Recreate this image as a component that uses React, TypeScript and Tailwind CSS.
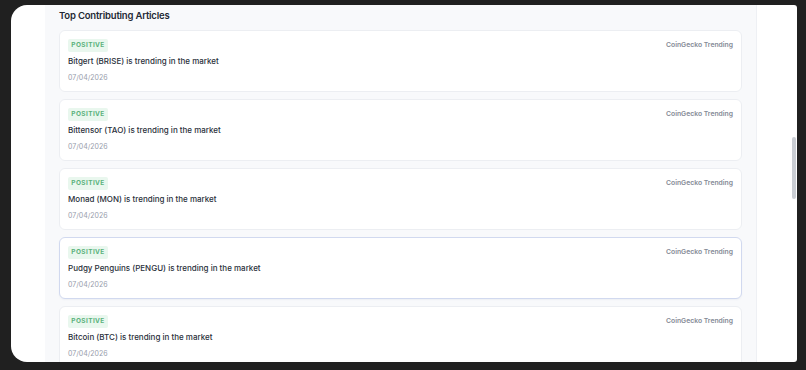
import React from 'react';

interface Article {
  title: string;
  date: string;
  source: string;
  sentiment: string;
  active?: boolean;
}

const articles: Article[] = [
  { title: 'Bitgert (BRISE) is trending in the market', date: '07/04/2026', source: 'CoinGecko Trending', sentiment: 'POSITIVE' },
  { title: 'Bittensor (TAO) is trending in the market', date: '07/04/2026', source: 'CoinGecko Trending', sentiment: 'POSITIVE' },
  { title: 'Monad (MON) is trending in the market', date: '07/04/2026', source: 'CoinGecko Trending', sentiment: 'POSITIVE' },
  { title: 'Pudgy Penguins (PENGU) is trending in the market', date: '07/04/2026', source: 'CoinGecko Trending', sentiment: 'POSITIVE', active: true },
  { title: 'Bitcoin (BTC) is trending in the market', date: '07/04/2026', source: 'CoinGecko Trending', sentiment: 'POSITIVE' },
];

const ArticleCard: React.FC<{ article: Article }> = ({ article }) => (
  <div
    className={
      article.active
        ? 'shrink-0 rounded-[6px] border border-[#d1d9ef] bg-white px-[8px] pt-[8px] pb-[8px] shadow-[0_1px_2px_rgba(60,80,140,0.06)]'
        : 'shrink-0 rounded-[6px] border border-[#eceef2] bg-white px-[8px] pt-[8px] pb-[8px]'
    }
  >
    <div className="flex items-center justify-between">
      <span className="flex h-[13px] w-[40px] items-center justify-center rounded-[2px] bg-[#e9f7ee] text-[6.5px] font-bold tracking-[0.06em] text-[#5bb27c]">
        {article.sentiment}
      </span>
      <span className="text-[6.8px] font-semibold text-[#858a96]">{article.source}</span>
    </div>
    <div className="mt-[3px] h-[12px] text-[8px] leading-[12px] font-medium text-[#2a2f3a]">{article.title}</div>
    <div className="mt-[6px] h-[10px] text-[7px] leading-[10px] text-[#989dab]">{article.date}</div>
  </div>
);

export default function App() {
  return (
    <div className="h-[370px] w-[806px] bg-[#202020] pt-[5px] pl-[11px] pr-[9px] pb-[8px] font-['Inter',sans-serif]">
      <div className="flex h-full overflow-hidden rounded-l-[16px] rounded-r-[3px] bg-white">
        {/* left gutter */}
        <div className="w-[34px] shrink-0" />

        {/* panel */}
        <div className="flex w-[712px] shrink-0 flex-col overflow-hidden border-r border-[#eef0f4] bg-[#f8f9fb] px-[14px] pt-[4px]">
          <h2 className="h-[14px] text-[9.5px] leading-[14px] font-semibold tracking-[-0.02em] text-[#232834]">Top Contributing Articles</h2>
          <div className="mt-[7px] flex flex-col gap-[7px]">
            {articles.map((a) => (
              <ArticleCard key={a.title} article={a} />
            ))}
          </div>
        </div>

        {/* right side + scrollbar */}
        <div className="relative flex-1">
          <div className="absolute top-[132px] right-[1px] h-[62px] w-[4px] rounded-full bg-[#c9cdd3]" />
        </div>
      </div>
    </div>
  );
}
